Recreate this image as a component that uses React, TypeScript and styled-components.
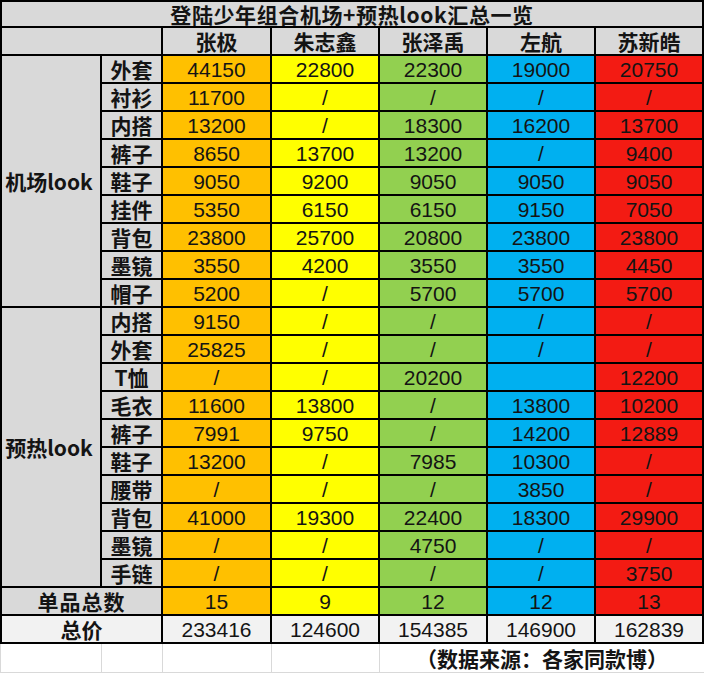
import React from 'react';
import styled, { createGlobalStyle } from 'styled-components';

const GlobalStyle = createGlobalStyle`
  html, body {
    margin: 0;
    padding: 0;
    background: #ffffff;
  }
`;

const tones: Record<string, string> = {
  orange: '#ffc000',
  yellow: '#ffff00',
  green: '#92d050',
  blue: '#00b0f0',
  red: '#f31b13',
};

const members = [
  { name: '张极', tone: 'orange' },
  { name: '朱志鑫', tone: 'yellow' },
  { name: '张泽禹', tone: 'green' },
  { name: '左航', tone: 'blue' },
  { name: '苏新皓', tone: 'red' },
];

type Row = [string, string[]];

const airport: Row[] = [
  ['外套', ['44150', '22800', '22300', '19000', '20750']],
  ['衬衫', ['11700', '/', '/', '/', '/']],
  ['内搭', ['13200', '/', '18300', '16200', '13700']],
  ['裤子', ['8650', '13700', '13200', '/', '9400']],
  ['鞋子', ['9050', '9200', '9050', '9050', '9050']],
  ['挂件', ['5350', '6150', '6150', '9150', '7050']],
  ['背包', ['23800', '25700', '20800', '23800', '23800']],
  ['墨镜', ['3550', '4200', '3550', '3550', '4450']],
  ['帽子', ['5200', '/', '5700', '5700', '5700']],
];

const preheat: Row[] = [
  ['内搭', ['9150', '/', '/', '/', '/']],
  ['外套', ['25825', '/', '/', '/', '/']],
  ['T恤', ['/', '/', '20200', '', '12200']],
  ['毛衣', ['11600', '13800', '/', '13800', '10200']],
  ['裤子', ['7991', '9750', '/', '14200', '12889']],
  ['鞋子', ['13200', '/', '7985', '10300', '/']],
  ['腰带', ['/', '/', '/', '3850', '/']],
  ['背包', ['41000', '19300', '22400', '18300', '29900']],
  ['墨镜', ['/', '/', '4750', '/', '/']],
  ['手链', ['/', '/', '/', '/', '3750']],
];

const counts = ['15', '9', '12', '12', '13'];
const totals = ['233416', '124600', '154385', '146900', '162839'];

const columns = '100px 61px 109px 108px 108px 108px 108px';

const Page = styled.div`
  width: 704px;
  height: 673px;
  overflow: hidden;
  background: #ffffff;
`;

const Sheet = styled.div`
  display: grid;
  grid-template-columns: ${columns};
  grid-template-rows: 26px repeat(22, 28px);
  border-top: 2px solid #000;
  border-left: 2px solid #000;
`;

const Cell = styled.div`
  display: flex;
  align-items: center;
  justify-content: center;
  box-sizing: border-box;
  border-right: 2px solid #000;
  border-bottom: 2px solid #000;
  white-space: nowrap;
  line-height: 1;
  color: #141414;
`;

const Label = styled(Cell)`
  font-family: 'Noto Sans CJK SC', 'Noto Sans', sans-serif;
  font-weight: 700;
  font-size: 21px;
  background: #d9d9d9;
`;

const TitleCell = styled(Label)`
  grid-column: 1 / span 7;
  letter-spacing: 0.6px;
`;

const CornerCell = styled(Label)`
  grid-column: span 2;
`;

const GroupCell = styled(Label)<{ $rows: number }>`
  grid-row: span ${(p) => p.$rows};
  padding-right: 4px;
`;

const TotalLabel = styled(Label)<{ $light?: boolean }>`
  grid-column: span 2;
  letter-spacing: ${(p) => (p.$light ? '0' : '1px')};
  background: ${(p) => (p.$light ? '#f2f2f2' : '#d9d9d9')};
`;

const ValueCell = styled(Cell)<{ $tone?: string }>`
  font-family: 'Liberation Sans', Arial, sans-serif;
  font-size: 21px;
  background: ${(p) => (p.$tone ? tones[p.$tone] : '#f2f2f2')};
  padding-top: 1px;
`;

const Footer = styled.div`
  display: grid;
  grid-template-columns: 102px 61px 109px 108px 324px;
  height: 29px;
`;

const FooterCell = styled.div<{ $first?: boolean }>`
  box-sizing: border-box;
  border-left: ${(p) => (p.$first ? '1px solid #d9d9d9' : 'none')};
  border-right: 1px solid #d9d9d9;
  border-bottom: 1px solid #d9d9d9;
  display: flex;
  align-items: center;
  justify-content: center;
`;

const Note = styled(FooterCell)`
  border-right: none;
  font-family: 'Noto Sans CJK SC', 'Noto Sans', sans-serif;
  font-weight: 700;
  font-size: 21px;
  line-height: 1;
  color: #141414;
`;

const renderGroup = (title: string, rows: Row[]) =>
  rows.map(([item, values], i) => (
    <React.Fragment key={title + item}>
      {i === 0 && <GroupCell $rows={rows.length}>{title}</GroupCell>}
      <Label>{item}</Label>
      {values.map((v, j) => (
        <ValueCell key={j} $tone={members[j].tone}>
          {v}
        </ValueCell>
      ))}
    </React.Fragment>
  ));

const App: React.FC = () => {
  return (
    <Page>
      <GlobalStyle />
      <Sheet>
        <TitleCell>登陆少年组合机场+预热look汇总一览</TitleCell>
        <CornerCell />
        {members.map((m) => (
          <Label key={m.name}>{m.name}</Label>
        ))}
        {renderGroup('机场look', airport)}
        {renderGroup('预热look', preheat)}
        <TotalLabel>单品总数</TotalLabel>
        {counts.map((c, j) => (
          <ValueCell key={j} $tone={members[j].tone}>
            {c}
          </ValueCell>
        ))}
        <TotalLabel $light>总价</TotalLabel>
        {totals.map((t, j) => (
          <ValueCell key={j}>{t}</ValueCell>
        ))}
      </Sheet>
      <Footer>
        <FooterCell $first />
        <FooterCell />
        <FooterCell />
        <FooterCell />
        <Note>（数据来源：各家同款博）</Note>
      </Footer>
    </Page>
  );
};

export default App;
